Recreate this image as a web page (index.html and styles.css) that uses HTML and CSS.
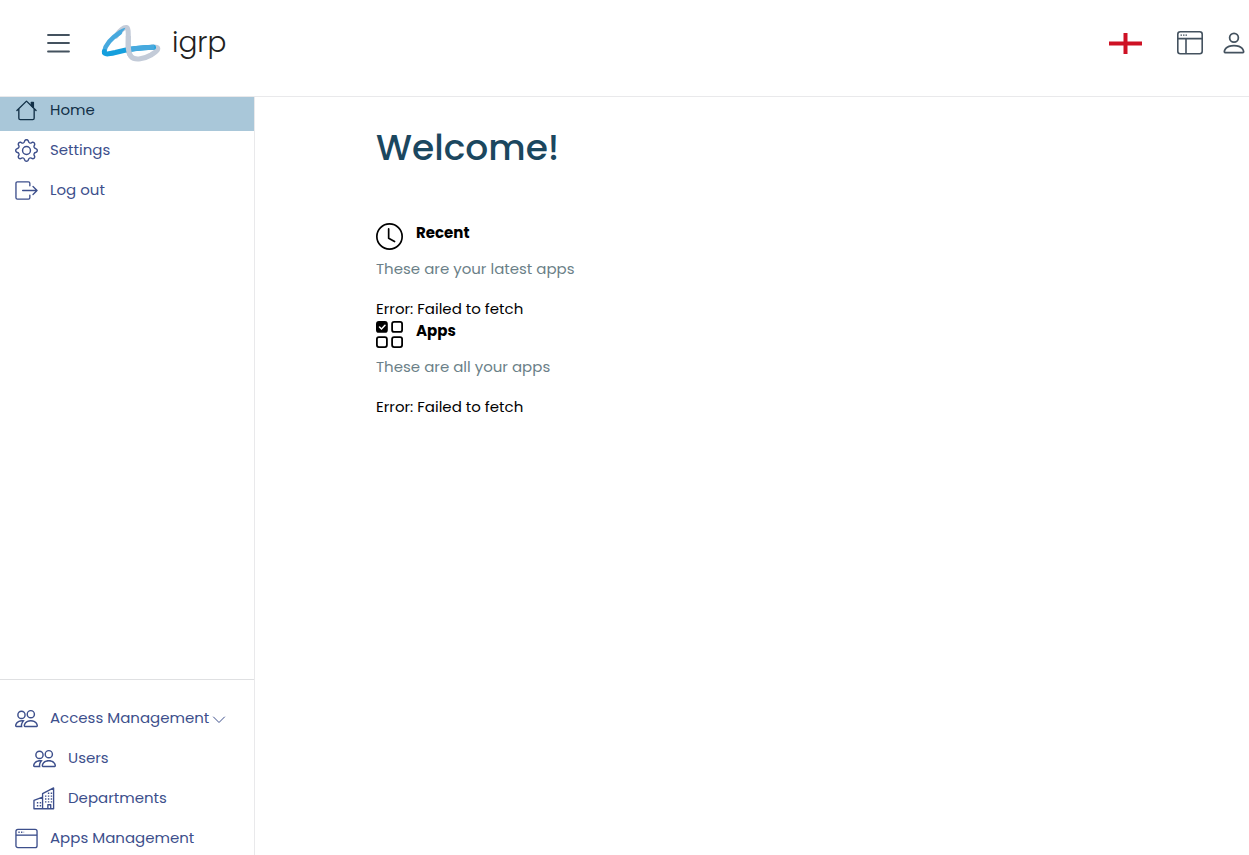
FILE: index.html
```html
<!DOCTYPE html>
<html lang="en">
<head>
<meta charset="utf-8">
<meta name="viewport" content="width=device-width, initial-scale=1">
<title>igrp</title>
<link rel="stylesheet" href="styles.css">
</head>
<body>
<svg class="sprite" aria-hidden="true">
  <symbol id="people" viewBox="0 0 16 16"><path fill="currentColor" d="M15 14s1 0 1-1-1-4-5-4-5 3-5 4 1 1 1 1zm-7.978-1L7 12.996c.001-.264.167-1.03.76-1.72C8.312 10.629 9.282 10 11 10c1.717 0 2.687.63 3.24 1.276.593.69.758 1.457.76 1.72l-.008.002-.014.002zM11 7a2 2 0 1 0 0-4 2 2 0 0 0 0 4m3-2a3 3 0 1 1-6 0 3 3 0 0 1 6 0M6.936 9.28a6 6 0 0 0-1.23-.247A7 7 0 0 0 5 9c-4 0-5 3-5 4q0 1 1 1h4.216A2.24 2.24 0 0 1 5 13c0-1.01.377-2.042 1.09-2.904.243-.294.526-.569.846-.816M4.92 10A5.5 5.5 0 0 0 4 13H1c0-.26.164-1.03.76-1.724.545-.636 1.492-1.256 3.16-1.275ZM1.5 5.5a3 3 0 1 1 6 0 3 3 0 0 1-6 0m3-2a2 2 0 1 0 0 4 2 2 0 0 0 0-4"/></symbol>
</svg>

<header class="topbar">
  <button class="icon-button" type="button" aria-label="Toggle menu">
    <svg width="26" height="26" viewBox="0 0 26 26" fill="none" stroke="currentColor" stroke-width="1.800" stroke-linecap="round"><path d="M3 5h21M3 13h21M3 21.500h21"/></svg>
  </button>
  <a class="brand" href="#">
    <svg width="60" height="40" viewBox="0 0 60 40" fill="none" stroke-linejoin="round" stroke-linecap="round" aria-hidden="true">
      <path stroke="#c3cbd8" stroke-width="5" d="M15 13C19 7 23.500 4.300 25.500 4.500c1.800.3 1.800 4 1.800 11.500s-1 13 2.700 17.500c4 4.500 14 2 20-1.500 6.500-4 8-6.500 6-7.500-1.500-.700-3-.700-5-.5"/>
      <path stroke="#47a9de" stroke-width="4.500" d="M19 9.500C12 14 4.500 21 3.300 28.500"/>
      <path fill="#47a9de" d="M17 8.500C19.500 6.500 22 5.200 24.300 4.800c-.3 1.700-2 3.200-4 5z"/>
      <path stroke="#159fdd" stroke-width="5" d="M3.300 28.500c-.5 3.500 4.500 2.500 11 1C22 27.500 38 24.500 52.500 24.300"/>
      <path stroke="#47a9de" stroke-width="5" stroke-linecap="butt" d="M29 26.300c7-1.200 15-1.900 24.500-2.100"/>
      <path stroke="#c3cbd8" stroke-width="5" stroke-linecap="butt" d="M27.300 13c0 8-1 16 2.700 20.500"/>
    </svg>
    <span class="brand-name">igrp</span>
  </a>
  <div class="tools">
    <button class="icon-button flag-button" type="button" aria-label="Language: English">
      <svg width="33" height="22" viewBox="0 0 33 22"><path fill="#fff" d="M0 0h33v22H0z"/><path fill="#ce1124" d="M14.500 1h4v21h-4zM0 9.500h33v4H0z"/></svg>
    </button>
    <button class="icon-button" type="button" aria-label="Applications">
      <svg width="28" height="26" viewBox="0 0 28 26" fill="none" stroke="currentColor" stroke-width="1.600"><rect x="1.800" y="1.800" width="24.400" height="22" rx="2.500"/><path d="M2 8.600h24M10 8.600v15"/><path stroke-width="1.300" stroke-dasharray="1.500 1" d="M4.500 5.200h6.500"/></svg>
    </button>
    <button class="icon-button user-button" type="button" aria-label="Account">
      <svg width="28" height="28" viewBox="0 0 16 16" fill="currentColor"><path d="M8 8a3 3 0 1 0 0-6 3 3 0 0 0 0 6m2-3a2 2 0 1 1-4 0 2 2 0 0 1 4 0m4 8c0 1-1 1-1 1H3s-1 0-1-1 1-4 6-4 6 3 6 4m-1-.004c-.001-.246-.154-.986-.832-1.664C11.516 10.680 10.289 10 8 10s-3.516.680-4.168 1.332c-.678.678-.830 1.418-.832 1.664z"/></svg>
    </button>
  </div>
</header>

<div class="layout">
  <aside class="sidebar">
    <nav class="menu" aria-label="Main">
      <a class="item active" href="#">
        <svg class="icon" viewBox="0 0 24 24" fill="none" stroke="currentColor" stroke-width="1.400" stroke-linejoin="round" stroke-linecap="round"><path d="M2 12 12 2.200 22 12M4 10.500V20q0 1.500 1.500 1.500h13q1.500 0 1.500-1.500v-9.500"/><path fill="currentColor" d="M17 3.500h2.200v5.400L17 6.700z"/></svg>
        <span>Home</span>
      </a>
      <a class="item" href="#">
        <svg class="icon" viewBox="0 0 16 16" fill="currentColor"><path d="M8 4.754a3.246 3.246 0 1 0 0 6.492 3.246 3.246 0 0 0 0-6.492M5.754 8a2.246 2.246 0 1 1 4.492 0 2.246 2.246 0 0 1-4.492 0"/><path d="M9.796 1.343c-.527-1.790-3.065-1.790-3.592 0l-.094.319a.873.873 0 0 1-1.255.520l-.292-.160c-1.640-.892-3.433.902-2.540 2.541l.159.292a.873.873 0 0 1-.520 1.255l-.319.094c-1.790.527-1.790 3.065 0 3.592l.319.094a.873.873 0 0 1 .520 1.255l-.160.292c-.892 1.640.901 3.434 2.541 2.540l.292-.159a.873.873 0 0 1 1.255.520l.094.319c.527 1.790 3.065 1.790 3.592 0l.094-.319a.873.873 0 0 1 1.255-.520l.292.160c1.640.893 3.434-.902 2.540-2.541l-.159-.292a.873.873 0 0 1 .520-1.255l.319-.094c1.790-.527 1.790-3.065 0-3.592l-.319-.094a.873.873 0 0 1-.520-1.255l.160-.292c.893-1.640-.902-3.433-2.541-2.540l-.292.159a.873.873 0 0 1-1.255-.520zm-2.633.283c.246-.835 1.428-.835 1.674 0l.094.319a1.873 1.873 0 0 0 2.693 1.115l.291-.160c.764-.415 1.600.420 1.184 1.185l-.159.292a1.873 1.873 0 0 0 1.116 2.692l.318.094c.835.246.835 1.428 0 1.674l-.319.094a1.873 1.873 0 0 0-1.115 2.693l.160.291c.415.764-.420 1.600-1.185 1.184l-.291-.159a1.873 1.873 0 0 0-2.693 1.116l-.094.318c-.246.835-1.428.835-1.674 0l-.094-.319a1.873 1.873 0 0 0-2.692-1.115l-.292.160c-.764.415-1.600-.420-1.184-1.185l.159-.291A1.873 1.873 0 0 0 1.945 8.930l-.319-.094c-.835-.246-.835-1.428 0-1.674l.319-.094A1.873 1.873 0 0 0 3.060 4.377l-.160-.292c-.415-.764.420-1.600 1.185-1.184l.292.159a1.873 1.873 0 0 0 2.692-1.115z"/></svg>
        <span>Settings</span>
      </a>
      <a class="item" href="#">
        <svg class="icon" viewBox="0 0 24 24" fill="none" stroke="currentColor" stroke-width="1.400" stroke-linejoin="round" stroke-linecap="round"><path d="M15.500 7V4.500q0-1.500-1.500-1.500H2.500Q1 3 1 4.500v15Q1 21 2.500 21H14q1.500 0 1.500-1.500V17M8 12h15M18.800 7.800 23 12l-4.200 4.200"/></svg>
        <span>Log out</span>
      </a>
    </nav>
    <nav class="menu admin" aria-label="Administration">
      <a class="item" href="#" aria-expanded="true">
        <svg class="icon"><use href="#people"/></svg>
        <span>Access Management</span>
        <svg class="chevron" viewBox="0 0 14 14" fill="none" stroke="currentColor" stroke-linecap="round" stroke-linejoin="round"><path d="M1.500 5 7 10.500 12.500 5"/></svg>
      </a>
      <a class="item nested" href="#">
        <svg class="icon"><use href="#people"/></svg>
        <span>Users</span>
      </a>
      <a class="item nested" href="#">
        <svg class="icon" viewBox="0 0 24 24" fill="none" stroke="currentColor" stroke-width="1.400" stroke-linejoin="round"><path d="M1 22.700V14l9-3.500V7l11.500-6v21.700zM10 10.500v12M15.500 22.500v-4h3v4"/><path stroke-width="1.500" stroke-dasharray="1.500 1.500" d="M4 16.500h5M4 19.500h5M12.500 9.500h7.500M12.500 12.500h7.500M12.500 15.500h7.500M15.500 6.500h4.500"/></svg>
        <span>Departments</span>
      </a>
      <a class="item" href="#">
        <svg class="icon" viewBox="0 0 24 24" fill="none" stroke="currentColor" stroke-width="1.400"><rect x="1" y="2.500" width="22" height="19" rx="2"/><path d="M1 8.500h22"/><path stroke-dasharray="1.400 1.400" d="M3.500 5.500h6"/></svg>
        <span>Apps Management</span>
      </a>
    </nav>
  </aside>

  <main class="content">
    <h1 class="welcome">Welcome!</h1>
    <section class="block">
      <div class="block-head">
        <svg class="block-icon" viewBox="0 0 16 16" fill="currentColor" aria-hidden="true"><path d="M8 3.500a.5.5 0 0 0-1 0V9a.5.5 0 0 0 .252.434l3.500 2a.5.5 0 0 0 .496-.868L8 8.710z"/><path d="M8 16A8 8 0 1 0 8 0a8 8 0 0 0 0 16m7-8A7 7 0 1 1 1 8a7 7 0 0 1 14 0"/></svg>
        <h2 class="block-title">Recent</h2>
      </div>
      <p class="hint">These are your latest apps</p>
      <p class="error">Error: Failed to fetch</p>
    </section>
    <section class="block">
      <div class="block-head">
        <svg class="block-icon" viewBox="0 0 27 27" fill="none" stroke="currentColor" stroke-width="1.800" aria-hidden="true"><rect x=".9" y=".9" width="10" height="10" rx="2" fill="currentColor"/><rect x="16.100" y=".9" width="10" height="10" rx="2"/><rect x=".9" y="16.100" width="10" height="10" rx="2"/><rect x="16.100" y="16.100" width="10" height="10" rx="2"/><path stroke="#fff" stroke-width="1.500" stroke-linecap="round" d="m3.500 6 2 2L9 4.200"/></svg>
        <h2 class="block-title">Apps</h2>
      </div>
      <p class="hint">These are all your apps</p>
      <p class="error">Error: Failed to fetch</p>
    </section>
  </main>
</div>
</body>
</html>
```

FILE: styles.css
```css
* {
  box-sizing: border-box;
}

body {
  display: flex;
  flex-direction: column;
  height: 100vh;
  margin: 0;
  overflow: hidden;
  background: #fff;
  color: #000;
  font-family: Poppins, Inter, sans-serif;
  font-size: 15px;
  line-height: 24px;
}

h1,
h2,
p {
  margin: 0;
}

svg {
  display: block;
  flex: none;
}

.sprite {
  position: absolute;
  width: 0;
  height: 0;
}

.topbar {
  position: relative;
  z-index: 1;
  display: flex;
  flex: none;
  align-items: center;
  padding: 18px 0 28px 45px;
  border-bottom: 1px solid #e9e9eb;
  background: #fff;
}

.icon-button {
  padding: 0;
  border: 0;
  background: none;
  color: #44525f;
  cursor: pointer;
}

.brand {
  display: flex;
  align-items: center;
  gap: 11px;
  margin-left: 30px;
  color: #231f20;
  text-decoration: none;
}

.brand-name {
  font-size: 28px;
  font-weight: 300;
  line-height: 50px;
}

.tools {
  display: flex;
  align-items: center;
  gap: 16px;
  margin-left: auto;
}

.flag-button {
  margin-right: 18px;
}

.user-button {
  margin-right: 1px;
}

.layout {
  display: flex;
  flex: 1;
  min-height: 0;
}

.sidebar {
  display: flex;
  flex: none;
  flex-direction: column;
  justify-content: space-between;
  width: 255px;
  border-right: 1px solid #e9e9eb;
}

.menu {
  margin-top: -6px;
}

.admin {
  margin-bottom: -4px;
  padding-top: 19px;
  border-top: 1px solid #dfe0e2;
}

.item {
  display: flex;
  align-items: center;
  gap: 12px;
  height: 40px;
  padding-left: 15px;
  padding-bottom: 2px;
  color: #3d4f8c;
  text-decoration: none;
}

.item.active {
  background: #a9c7d9;
  color: #123047;
}

.item.nested {
  padding-left: 33px;
}

.icon {
  width: 23px;
  height: 23px;
  margin-top: 1px;
}

.chevron {
  width: 14px;
  height: 14px;
  margin: 2px 0 0 -9px;
}

.content {
  flex: 1;
  min-width: 0;
  padding: 26px 121px;
}

.welcome {
  margin-bottom: 49px;
  color: #1b475f;
  font-size: 36px;
  font-weight: 500;
  line-height: 50px;
}

.block-head {
  display: flex;
  gap: 13px;
  padding-top: 1px;
}

.block-icon {
  width: 27px;
  height: 27px;
}

.block-title {
  font-size: 15px;
  font-weight: 700;
  line-height: 20px;
}

.hint {
  margin: 7px 0 17px;
  color: #6b7f88;
}

.error {
  line-height: 22px;
}
```
